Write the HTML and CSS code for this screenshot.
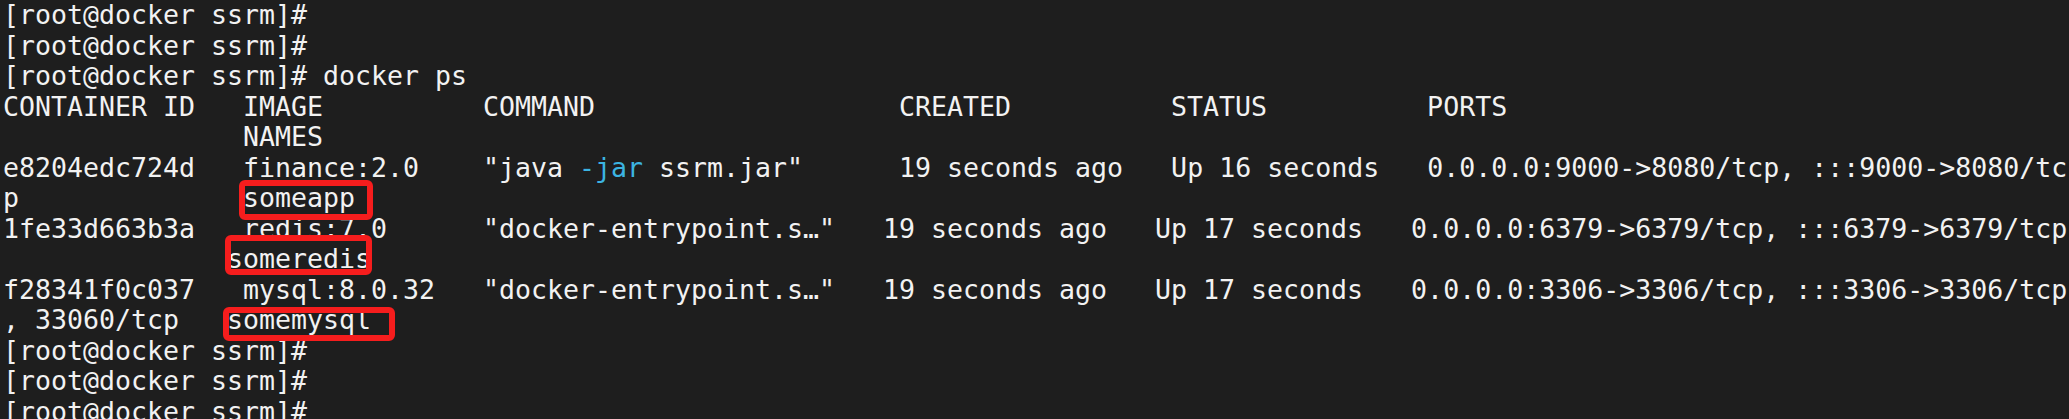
FILE: index.html
```html
<!DOCTYPE html>
<html lang="en">
<head>
<meta charset="utf-8">
<title>docker ps</title>
<link rel="stylesheet" href="styles.css">
</head>
<body>
<main class="terminal">
<pre class="screen">[root@docker ssrm]#
[root@docker ssrm]#
[root@docker ssrm]# docker ps
CONTAINER ID   IMAGE          COMMAND                   CREATED          STATUS          PORTS
               NAMES
e8204edc724d   finance:2.0    "java <span class="hl">-jar</span> ssrm.jar"      19 seconds ago   Up 16 seconds   0.0.0.0:9000-&gt;8080/tcp, :::9000-&gt;8080/tc
p              someapp
1fe33d663b3a   redis:7.0      "docker-entrypoint.s…"   19 seconds ago   Up 17 seconds   0.0.0.0:6379-&gt;6379/tcp, :::6379-&gt;6379/tcp
              someredis
f28341f0c037   mysql:8.0.32   "docker-entrypoint.s…"   19 seconds ago   Up 17 seconds   0.0.0.0:3306-&gt;3306/tcp, :::3306-&gt;3306/tcp
, 33060/tcp   somemysql
[root@docker ssrm]#
[root@docker ssrm]#
[root@docker ssrm]#</pre>
<div class="mark mark-app"></div>
<div class="mark mark-redis"></div>
<div class="mark mark-mysql"></div>
</main>
</body>
</html>
```

FILE: styles.css
```css
html, body {
  margin: 0;
  padding: 0;
  background: #1e1e1e;
  overflow: hidden;
}

.terminal {
  position: relative;
  width: 2069px;
  height: 419px;
  overflow: hidden;
  background: #1e1e1e;
}

.screen {
  margin: 0;
  padding: 0 0 0 3px;
  font-family: "DejaVu Sans Mono", "Liberation Mono", monospace;
  font-size: 26.58px;
  line-height: 30.5px;
  color: #f2f2f2;
  white-space: pre;
}

.hl {
  color: #3cb4e2;
}

.mark {
  position: absolute;
  border: 6px solid #f61d1d;
  border-radius: 6px;
  box-sizing: border-box;
}

.mark-app {
  left: 239px;
  top: 180px;
  width: 134px;
  height: 40px;
}

.mark-redis {
  left: 225px;
  top: 235px;
  width: 147px;
  height: 40px;
}

.mark-mysql {
  left: 223px;
  top: 307px;
  width: 172px;
  height: 34px;
}
```
